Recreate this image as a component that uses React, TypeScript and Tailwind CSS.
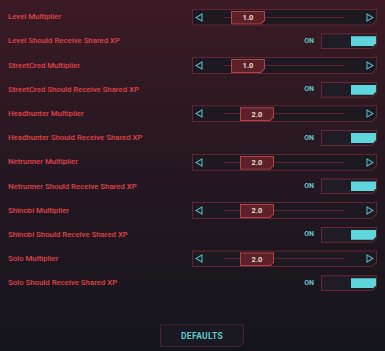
import React from 'react';

type Row =
  | { kind: 'slider'; label: string; value: string; pos: number }
  | { kind: 'toggle'; label: string };

const rows: Row[] = [
  { kind: 'slider', label: 'Level Multiplier', value: '1.0', pos: 39 },
  { kind: 'toggle', label: 'Level Should Receive Shared XP' },
  { kind: 'slider', label: 'StreetCred Multiplier', value: '1.0', pos: 39 },
  { kind: 'toggle', label: 'StreetCred Should Receive Shared XP' },
  { kind: 'slider', label: 'Headhunter Multiplier', value: '2.0', pos: 48 },
  { kind: 'toggle', label: 'Headhunter Should Receive Shared XP' },
  { kind: 'slider', label: 'Netrunner Multiplier', value: '2.0', pos: 48 },
  { kind: 'toggle', label: 'Netrunner Should Receive Shared XP' },
  { kind: 'slider', label: 'Shinobi Multiplier', value: '2.0', pos: 48 },
  { kind: 'toggle', label: 'Shinobi Should Receive Shared XP' },
  { kind: 'slider', label: 'Solo Multiplier', value: '2.0', pos: 48 },
  { kind: 'toggle', label: 'Solo Should Receive Shared XP' },
];

const Arrow = ({ dir }: { dir: 'left' | 'right' }) => (
  <svg width="8" height="9" viewBox="0 0 8 9" className="shrink-0">
    {dir === 'left' ? (
      <path d="M7 1 L1 4.5 L7 8 Z" fill="none" stroke="#4fb8bf" strokeWidth="1.1" />
    ) : (
      <path d="M1 1 L7 4.5 L1 8 Z" fill="none" stroke="#4fb8bf" strokeWidth="1.1" />
    )}
  </svg>
);

const Slider = ({ value, pos }: { value: string; pos: number }) => (
  <div className="w-[185px] h-[17px] bg-[#622632] p-px [clip-path:polygon(0_0,100%_0,100%_calc(100%-5px),calc(100%-5px)_100%,0_100%)]">
    <div className="relative h-full bg-[#1e1921] flex items-center justify-between px-[2px] [clip-path:polygon(0_0,100%_0,100%_calc(100%-4.5px),calc(100%-4.5px)_100%,0_100%)]">
      <Arrow dir="left" />
      <div className="flex-1 mx-[21px] h-px bg-[#5a2430]" />
      <Arrow dir="right" />
      <div
        className="absolute top-[1px] h-[14px] w-[34px] bg-[#b2424c] p-px [clip-path:polygon(0_0,100%_0,100%_calc(100%-4px),calc(100%-4px)_100%,0_100%)]"
        style={{ left: pos - 1 }}
      >
        <div className="h-full bg-[#5c2029] flex items-center justify-center [clip-path:polygon(0_0,100%_0,100%_calc(100%-3.5px),calc(100%-3.5px)_100%,0_100%)]">
          <span className="text-[7.5px] font-bold text-[#e6dcd6] leading-none">{value}</span>
        </div>
      </div>
    </div>
  </div>
);

const Toggle = () => (
  <div className="flex items-center">
    <span className="text-[7px] font-bold text-[#63c6cc] mr-[7px] leading-none">ON</span>
    <div className="w-[56px] h-[16px] bg-[#6a2834] p-px [clip-path:polygon(0_0,100%_0,100%_calc(100%-5px),calc(100%-5px)_100%,0_100%)]">
      <div className="h-full bg-[#201c25] flex justify-end py-[2px] [clip-path:polygon(0_0,100%_0,100%_calc(100%-4.5px),calc(100%-4.5px)_100%,0_100%)]">
        <div className="w-[25px] h-full bg-[#5fd6de] [clip-path:polygon(0_0,100%_0,100%_calc(100%-3px),calc(100%-3px)_100%,0_100%)]" />
      </div>
    </div>
  </div>
);

export default function App() {
  return (
    <div
      className="w-[385px] h-[351px] bg-gradient-to-b from-[#3b1a24] via-[#241721] to-[#15151d] pt-[5px] pl-[8px] pr-[8px] flex flex-col overflow-hidden"
      style={{ fontFamily: 'Roboto, "Liberation Sans", Arial, sans-serif' }}
    >
      {rows.map((r) => (
        <div key={r.label} className="h-[24.2px] flex items-center justify-between shrink-0">
          <span className="text-[7.8px] font-medium text-[#e0434b] leading-none">{r.label}</span>
          {r.kind === 'slider' ? <Slider value={r.value} pos={r.pos} /> : <Toggle />}
        </div>
      ))}
      <div className="flex mt-[29px] pl-[152px]">
        <div className="w-[84px] h-[23px] bg-[#4a2230] p-px [clip-path:polygon(0_0,100%_0,100%_calc(100%-5px),calc(100%-5px)_100%,0_100%)]">
          <div className="h-full bg-[#1a1821] flex items-center justify-center [clip-path:polygon(0_0,100%_0,100%_calc(100%-4.5px),calc(100%-4.5px)_100%,0_100%)]">
            <span className="text-[8.5px] font-bold text-[#5fc8cf] tracking-[0.3px] leading-none">DEFAULTS</span>
          </div>
        </div>
      </div>
    </div>
  );
}
